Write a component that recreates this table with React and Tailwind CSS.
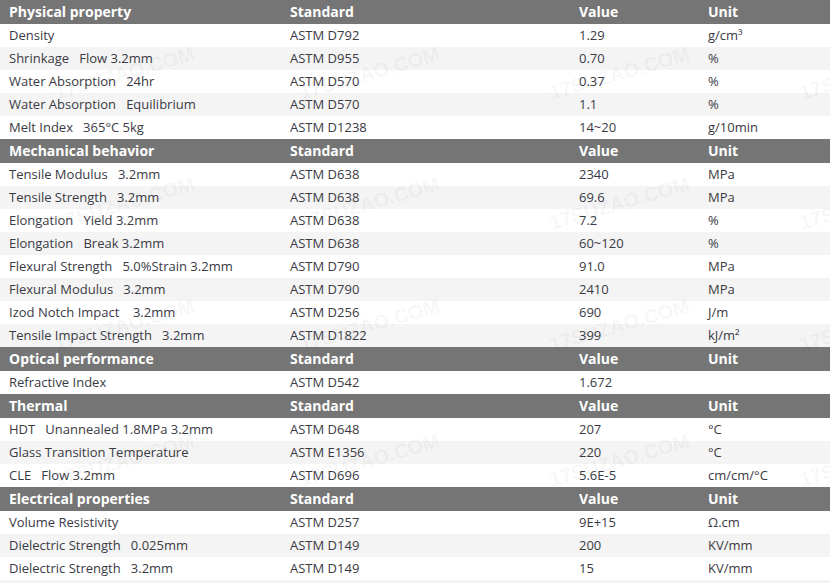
const secciones = [
  {
    titulo: "Physical property",
    filas: [
      ["Density", "ASTM D792", "1.29", "g/cm³"],
      ["Shrinkage   Flow 3.2mm", "ASTM D955", "0.70", "%"],
      ["Water Absorption   24hr", "ASTM D570", "0.37", "%"],
      ["Water Absorption   Equilibrium", "ASTM D570", "1.1", "%"],
      ["Melt Index   365°C 5kg", "ASTM D1238", "14~20", "g/10min"],
    ],
  },
  {
    titulo: "Mechanical behavior",
    filas: [
      ["Tensile Modulus   3.2mm", "ASTM D638", "2340", "MPa"],
      ["Tensile Strength   3.2mm", "ASTM D638", "69.6", "MPa"],
      ["Elongation   Yield 3.2mm", "ASTM D638", "7.2", "%"],
      ["Elongation   Break 3.2mm", "ASTM D638", "60~120", "%"],
      ["Flexural Strength   5.0%Strain 3.2mm", "ASTM D790", "91.0", "MPa"],
      ["Flexural Modulus   3.2mm", "ASTM D790", "2410", "MPa"],
      ["Izod Notch Impact    3.2mm", "ASTM D256", "690", "J/m"],
      ["Tensile Impact Strength   3.2mm", "ASTM D1822", "399", "kJ/m²"],
    ],
  },
  {
    titulo: "Optical performance",
    filas: [["Refractive Index", "ASTM D542", "1.672", ""]],
  },
  {
    titulo: "Thermal",
    filas: [
      ["HDT   Unannealed 1.8MPa 3.2mm", "ASTM D648", "207", "°C"],
      ["Glass Transition Temperature", "ASTM E1356", "220", "°C"],
      ["CLE   Flow 3.2mm", "ASTM D696", "5.6E-5", "cm/cm/°C"],
    ],
  },
  {
    titulo: "Electrical properties",
    filas: [
      ["Volume Resistivity", "ASTM D257", "9E+15", "Ω.cm"],
      ["Dielectric Strength   0.025mm", "ASTM D149", "200", "KV/mm"],
      ["Dielectric Strength   3.2mm", "ASTM D149", "15", "KV/mm"],
    ],
  },
];

// marcas de agua (posición libre sobre la tabla)
const marcas = [];
[78, 208, 330, 465].forEach((y) => {
  [55, 300, 550, 800].forEach((x) => marcas.push({ x, y }));
});

const cols = "grid grid-cols-[281px_289px_129px_1fr]";

export default function App() {
  return (
    <div className="relative w-[830px] h-[583px] overflow-hidden bg-white font-['Open_Sans',sans-serif] text-[13px] text-[#3a3a44]">
      {secciones.map((s) => (
        <div key={s.titulo}>
          <div className={`${cols} h-6 items-center bg-[#757575] text-white font-bold text-[14px] pb-px`}>
            <div className="pl-[9px]">{s.titulo}</div>
            <div className="pl-[9px]">Standard</div>
            <div className="pl-[9px]">Value</div>
            <div className="pl-[9px]">Unit</div>
          </div>
          {s.filas.map((f, i) => (
            <div
              key={i}
              className={`${cols} h-[23px] items-center pt-px ${i % 2 === 1 ? "bg-[#f4f4f4]" : "bg-white"}`}
            >
              {f.map((c, j) => (
                <div key={j} className="pl-[9px] whitespace-pre">
                  {c}
                </div>
              ))}
            </div>
          ))}
        </div>
      ))}
      <div className="h-[3px] bg-[#f4f4f4]" />

      {marcas.map((m, i) => (
        <div
          key={i}
          className="absolute pointer-events-none font-['Liberation_Sans',sans-serif] font-bold text-[20px] text-black/[0.05] -rotate-[16deg] origin-left whitespace-nowrap"
          style={{ left: m.x, top: m.y }}
        >
          17SUZAO.COM
        </div>
      ))}
    </div>
  );
}
